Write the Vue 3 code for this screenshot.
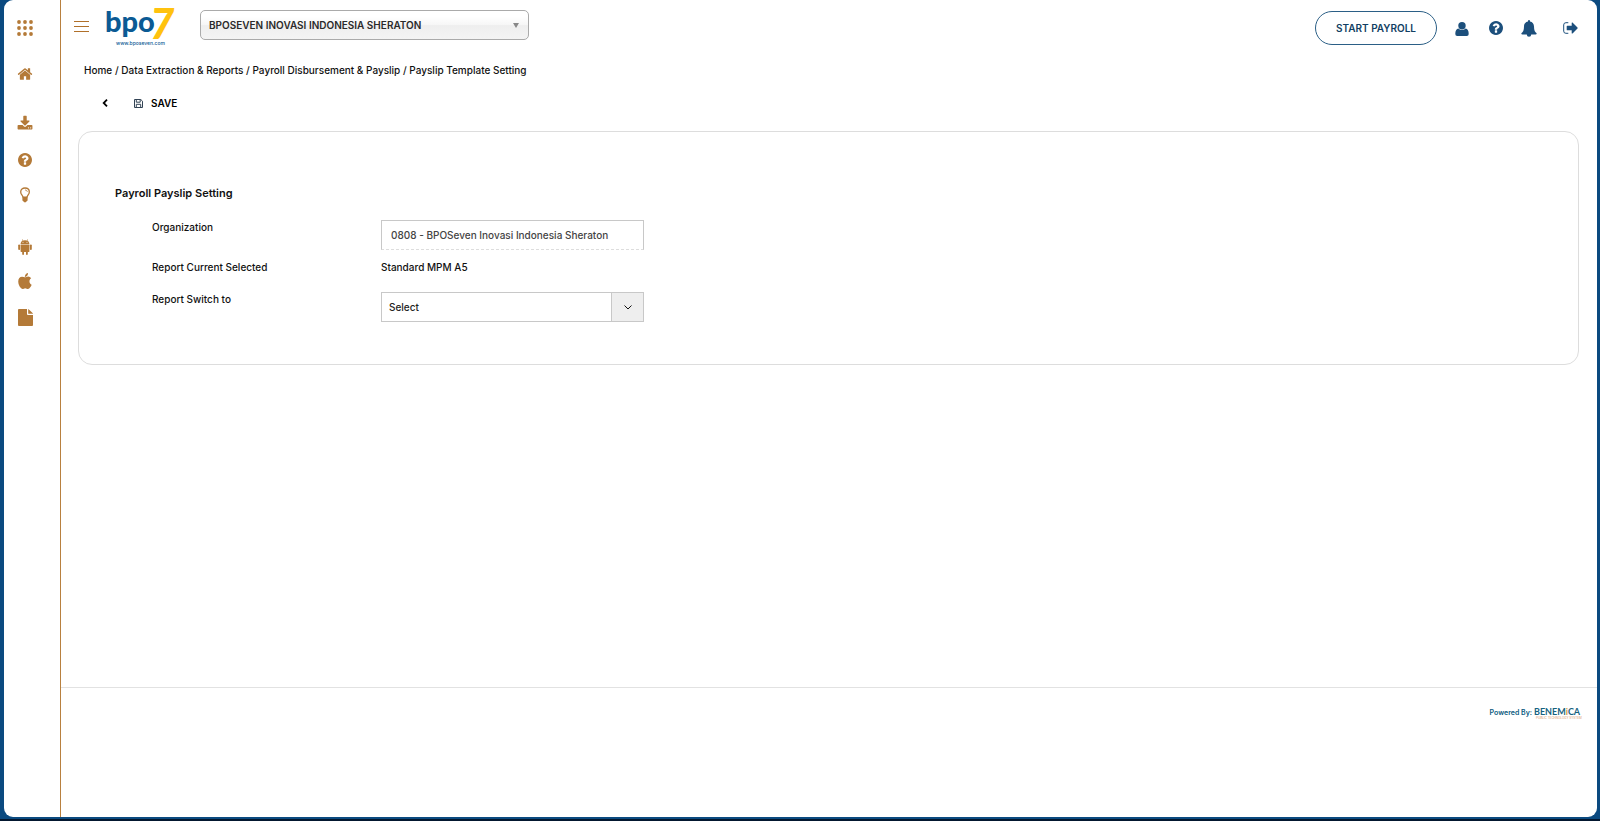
<script setup>
import { ref } from 'vue'

const company = ref('BPOSEVEN INOVASI INDONESIA SHERATON')
const organization = ref('0808 - BPOSeven Inovasi Indonesia Sheraton')
const report = ref('Select')
const crumbs = ['Home', 'Data Extraction & Reports', 'Payroll Disbursement & Payslip']

const question =
  'M1024 1376v-192q0-14-9-23t-23-9h-192q-14 0-23 9t-9 23v192q0 14 9 23t23 9h192q14 0 23-9t9-23zm256-672q0-88-55.5-163t-138.5-116-170-41q-243 0-371 213-15 24 8 42l132 100q7 6 19 6 16 0 25-12 53-68 86-92 34-24 86-24 48 0 85.5 26t37.5 59q0 38-20 61t-68 45q-63 28-115.5 86.5t-52.5 125.5v36q0 14 9 23t23 9h192q14 0 23-9t9-23q0-19 21.5-49.5t54.5-49.5q32-18 49-28.5t46-35 44.500-48 28-60.500 12.500-81zm384 192q0 209-103 385.5t-279.5 279.5-385.5 103-385.5-103-279.5-279.5-103-385.5 103-385.5 279.5-279.5 385.5-103 385.5 103 279.5 279.5 103 385.5z'
</script>

<template>
  <div class="frame">
    <div class="window">
      <nav class="sidebar" aria-label="Shortcuts">
        <a href="#" class="apps" aria-label="Apps">
          <svg viewBox="0 0 16 16" width="16" height="16">
            <g v-for="y in [2, 8, 14]" :key="y">
              <circle v-for="x in [2, 8, 14]" :key="x" :cx="x" :cy="y" r="1.9" />
            </g>
          </svg>
        </a>
        <a href="#" class="home" aria-label="Home">
          <svg viewBox="0 0 1792 1792" width="16" height="16">
            <path d="M1472 992v480q0 26-19 45t-45 19h-384v-384h-256v384h-384q-26 0-45-19t-19-45v-480q0-1 .5-3t.5-3l575-474 575 474q1 2 1 6zm223-69l-62 74q-8 9-21 11h-3q-13 0-21-7l-692-577-692 577q-12 8-24 7-13-2-21-11l-62-74q-8-10-7-23.5t11-21.5l719-599q32-26 76-26t76 26l244 204v-195q0-14 9-23t23-9h192q14 0 23 9t9 23v408l219 182q10 8 11 21.5t-7 23.5z" />
          </svg>
        </a>
        <a href="#" class="download" aria-label="Download">
          <svg viewBox="0 0 1792 1600" width="16" height="16">
            <path d="M1344 1344q0-26-19-45t-45-19-45 19-19 45 19 45 45 19 45-19 19-45zm256 0q0-26-19-45t-45-19-45 19-19 45 19 45 45 19 45-19 19-45zm128-224v320q0 40-28 68t-68 28h-1472q-40 0-68-28t-28-68v-320q0-40 28-68t68-28h465l135 136q58 56 136 56t136-56l136-136h464q40 0 68 28t28 68zm-325-569q17 41-14 70l-448 448q-18 19-45 19t-45-19l-448-448q-31-29-14-70 17-39 59-39h256v-448q0-26 19-45t45-19h256q26 0 45 19t19 45v448h256q42 0 59 39z" />
          </svg>
        </a>
        <a href="#" class="help" aria-label="Help">
          <svg viewBox="128 128 1536 1536" width="14" height="14"><path :d="question" /></svg>
        </a>
        <a href="#" class="ideas" aria-label="Ideas">
          <svg viewBox="0 0 12 16" width="12" height="16">
            <path d="M4 10.400C4 8.500 1.700 7.700 1.700 4.900 1.700 2.500 3.600 1 6 1s4.300 1.500 4.300 3.900C10.300 7.700 8 8.500 8 10.400" fill="none" stroke="currentColor" stroke-width="1.300" />
            <path d="M3.400 9.400h5.200v4.200L7.400 14.400 6.900 15.300H5.100L4.600 14.400 3.400 13.600z" />
            <path d="M6 3c1.400 0 2.300.7 2.300 1.900" fill="none" stroke="currentColor" stroke-width=".8" />
          </svg>
        </a>
        <a href="#" class="android" aria-label="Android">
          <svg viewBox="0 0 14 16" width="14" height="16">
            <path fill-rule="evenodd" d="M2.600 5.100C2.600 3.500 3.500 2.300 4.700 1.600L3.900.3 4.200.1 5.100 1.500a5.300 5.300 0 0 1 3.800 0L9.800.1l.3.200-.8 1.300c1.200.7 2.100 1.900 2.100 3.500zM4.500 3.200a.5.500 0 1 0 1 0 .5.500 0 1 0-1 0m4 0a.5.500 0 1 0 1 0 .5.500 0 1 0-1 0" />
            <path d="M2.600 5.600h8.800v6.600q0 .9-.9.900h-.7v2q0 .9-.9.900T8 15.100v-2H6v2q0 .9-.9.900t-.9-.9v-2h-.7q-.9 0-.9-.9z" />
            <rect x=".2" y="5.400" width="1.900" height="5.600" rx=".95" />
            <rect x="11.900" y="5.400" width="1.900" height="5.600" rx=".95" />
          </svg>
        </a>
        <a href="#" class="apple" aria-label="Apple">
          <svg viewBox="192 0 1408 1664" width="14" height="16">
            <path d="M1585 1215q-39 125-123 250-129 196-257 196-49 0-140-32-86-32-151-32-61 0-142 33-81 34-132 34-152 0-301-259-147-261-147-503 0-228 113-374 113-144 284-144 72 0 177 30 104 30 138 30 45 0 143-34 102-34 173-34 119 0 213 65 52 36 104 100-79 67-114 118-65 94-65 207 0 124 69 223t158 126zm-376-1173q0 61-29 136-30 75-93 138-54 54-108 72-37 11-104 17 3-149 78-257 74-107 250-148 1 3 2.500 11t2.500 11q0 4 .5 10t.5 10z" />
          </svg>
        </a>
        <a href="#" class="document" aria-label="Document">
          <svg viewBox="0 0 15 17" width="15" height="17">
            <path d="M.9 0H9v5.100q0 .9.900.9H15v10.100q0 .9-.9.900H.9Q0 17 0 16.100V.9Q0 0 .9 0zM10.200 0q.4.100.7.400l3.700 3.700q.3.300.4.700h-4.800z" />
          </svg>
        </a>
      </nav>

      <div class="page">
        <header class="topbar">
          <button type="button" class="menu" aria-label="Menu"><i></i><i></i><i></i></button>
          <a href="#" class="logo" aria-label="bpo7">
            <svg viewBox="0 0 72 40" width="72" height="40">
              <text x="0" y="24" class="logo-name">bpo</text>
              <text x="45" y="31" class="logo-seven">7</text>
              <text x="11" y="37" class="logo-site">www.bposeven.com</text>
            </svg>
          </a>
          <div class="company">
            <select v-model="company" aria-label="Company">
              <option>BPOSEVEN INOVASI INDONESIA SHERATON</option>
            </select>
            <svg viewBox="0 0 6 5" width="6" height="5"><path d="M0 0h6L3 5z" /></svg>
          </div>
          <div class="actions">
            <button type="button" class="start">START PAYROLL</button>
            <button type="button" class="icon user" aria-label="Account">
              <svg viewBox="0 0 14 14" width="14" height="14">
                <circle cx="7" cy="3.700" r="3.700" />
                <path d="M3.400 6.500Q5 8.100 7 8.100t3.600-1.600Q13.700 7 13.700 12q0 2-1.900 2H2.200Q.3 14 .3 12 .3 7 3.400 6.500z" />
              </svg>
            </button>
            <button type="button" class="icon support" aria-label="Support">
              <svg viewBox="128 128 1536 1536" width="14" height="14"><path :d="question" /></svg>
            </button>
            <button type="button" class="icon" aria-label="Notifications">
              <svg viewBox="0 0 16 17" width="16" height="17">
                <path d="M8 0q1 0 1 1v.5c2.500.5 4 2.400 4 4.900 0 4 1 5.600 2.700 6.900q0 1.200-1.100 1.200H10.200a2.200 2.200 0 0 1-4.400 0H1.400Q.3 14.500.3 13.300C2 12 3 10.400 3 6.400c0-2.500 1.500-4.400 4-4.900V1q0-1 1-1z" />
              </svg>
            </button>
            <button type="button" class="icon exit" aria-label="Sign out">
              <svg viewBox="0 0 15 12" width="15" height="12">
                <path d="M5.300.7H2.900Q.7.700.7 2.900v6.200q0 2.200 2.200 2.200h2.400" fill="none" stroke="currentColor" stroke-width="1" />
                <path d="M4.300 3.700h4.400V1q0-.9.800-.4l5 5q.4.400 0 .8l-5 5q-.8.500-.8-.4V8.300H4.300q-.6 0-.6-.6V4.300q0-.6.600-.6z" />
              </svg>
            </button>
          </div>
        </header>

        <nav class="crumbs" aria-label="Breadcrumb">
          <template v-for="crumb in crumbs" :key="crumb"><a href="#">{{ crumb }}</a> / </template>
          <span>Payslip Template Setting</span>
        </nav>

        <div class="toolbar">
          <button type="button" aria-label="Back">
            <svg viewBox="0 0 6 8" width="6" height="8">
              <path d="M5 .7 1.700 4 5 7.300" fill="none" stroke="currentColor" stroke-width="1.800" />
            </svg>
          </button>
          <button type="button">
            <svg viewBox="0 0 9 9" width="9" height="9" class="disk">
              <path d="M.5.5h6.300l1.700 1.700v6.300h-8zM2.300.5v2.700h3.900V.5M2.300 8.500V5.300h4.400v3.200" fill="none" stroke="currentColor" />
            </svg>
            <span>SAVE</span>
          </button>
        </div>

        <main class="card">
          <h1>Payroll Payslip Setting</h1>
          <div class="form">
            <label for="organization">Organization</label>
            <input id="organization" v-model="organization" type="text" readonly />
            <span>Report Current Selected</span>
            <span>Standard MPM A5</span>
            <label for="report" class="last">Report Switch to</label>
            <div class="report last">
              <select id="report" v-model="report">
                <option>Select</option>
              </select>
              <span class="arrow">
                <svg viewBox="0 0 8 5" width="8" height="5">
                  <path d="M.5.5 4 4 7.500.5" fill="none" stroke="currentColor" />
                </svg>
              </span>
            </div>
          </div>
        </main>

        <footer>
          <span>Powered By:</span>
          <svg viewBox="0 0 49 14" width="49" height="14" role="img" aria-label="Benemica">
            <text x="0" y="9" class="brand">BENEM<tspan class="gold">i</tspan>CA</text>
            <text x="2" y="13" class="tagline">PUBLIC TECHNOLOGY SYSTEM</text>
          </svg>
        </footer>
      </div>
    </div>
  </div>
</template>

<style>
body {
  background: #0b4a80;
}
</style>

<style scoped>
.frame {
  box-sizing: border-box;
  display: flex;
  min-height: 100vh;
  padding: 0 3px 2px 4px;
  background: #0b4a80;
  border-bottom: 2px solid #03172f;
  font-family: Inter, "Liberation Sans", sans-serif;
  font-size: 10px;
  font-weight: 500;
  line-height: 14px;
  color: #111;
}
.window {
  display: flex;
  flex: 1;
  background: #fff;
  border-radius: 9px;
}
button, input, select {
  margin: 0;
  padding: 0;
  border: 0;
  background: none;
  color: inherit;
  font: inherit;
}
button {
  cursor: pointer;
}
a {
  color: inherit;
  text-decoration: none;
}
svg {
  display: block;
  fill: currentColor;
}
.sidebar {
  display: flex;
  flex-direction: column;
  align-items: center;
  box-sizing: border-box;
  width: 57px;
  padding: 20px 14px 0 0;
  border-right: 1px solid #b8803f;
  color: #b47a38;
}
.home {
  margin-top: 30px;
}
.download {
  margin-top: 33px;
}
.help {
  margin-top: 22px;
}
.ideas {
  margin-top: 20px;
}
.android {
  margin-top: 36px;
}
.apple {
  margin-top: 18px;
}
.document {
  margin-top: 20px;
}
.page {
  display: flex;
  flex: 1;
  flex-direction: column;
  min-width: 0;
}
.topbar {
  display: flex;
  align-items: flex-start;
  padding: 8px 19px 0 13px;
}
.menu {
  display: grid;
  gap: 4px;
  width: 15px;
  margin-top: 13px;
}
.menu i {
  height: 1px;
  background: #b0702a;
}
.logo {
  margin-left: 16px;
}
.logo svg {
  overflow: visible;
}
.logo-name {
  font: 900 29px Lato, sans-serif;
  fill: #0b5a94;
}
.logo-seven {
  font: italic 900 42px Lato, sans-serif;
  fill: #ffc20e;
}
.logo-site {
  font: 500 5px Inter, sans-serif;
  fill: #0b5a94;
}
.company {
  position: relative;
  margin: 2px 0 0 23px;
}
.company select {
  box-sizing: border-box;
  width: 329px;
  height: 30px;
  padding: 0 28px 0 8px;
  border: 1px solid #aaa;
  border-radius: 5px;
  appearance: none;
  background: linear-gradient(#fff 20%, #f6f6f6 50%, #eee 52%, #f4f4f4);
  color: #2b2b2b;
  font-weight: 600;
}
.company svg {
  position: absolute;
  top: 13px;
  right: 10px;
  color: #888;
  pointer-events: none;
}
.actions {
  display: flex;
  align-items: center;
  gap: 18px;
  margin: 3px 0 0 auto;
  color: #1c4f7c;
}
.start {
  width: 122px;
  height: 34px;
  border: 1px solid #2b5f86;
  border-radius: 17px;
  color: #123f63;
  font-weight: 600;
}
.user {
  padding-top: 2px;
}
.support {
  margin-left: 2px;
}
.exit {
  margin-left: 8px;
}
.crumbs {
  margin: 15px 0 0 23px;
}
.toolbar {
  display: flex;
  gap: 26px;
  margin: 19px 0 0 41px;
  color: #000;
}
.toolbar button {
  display: flex;
  align-items: center;
  gap: 8px;
  font-weight: 600;
}
.disk {
  color: #345;
}
.card {
  margin: 21px 18px 0 17px;
  padding: 54px 36px 42px;
  border: 1px solid #ddd;
  border-radius: 14px;
}
h1 {
  margin: 0;
  font-size: 11px;
  font-weight: 600;
  line-height: 14px;
}
.form {
  display: grid;
  grid-template-columns: 229px 263px;
  row-gap: 10px;
  margin: 20px 0 0 37px;
}
.last {
  margin-top: 8px;
}
input {
  box-sizing: border-box;
  width: 100%;
  height: 30px;
  padding: 0 9px;
  border: 1px solid #c8c8c8;
  border-bottom: 1px dashed #ddd;
  color: #444;
}
.report {
  position: relative;
}
.report select {
  box-sizing: border-box;
  width: 100%;
  height: 30px;
  padding: 0 40px 0 7px;
  border: 1px solid #c8c8c8;
  border-radius: 0;
  appearance: none;
  color: #222;
}
.arrow {
  position: absolute;
  inset: 1px 1px 1px auto;
  display: grid;
  place-items: center;
  width: 31px;
  border-left: 1px solid #c8c8c8;
  background: #eee;
  pointer-events: none;
}
footer {
  display: flex;
  align-items: center;
  justify-content: flex-end;
  gap: 2px;
  height: 50px;
  margin-top: auto;
  margin-bottom: 79px;
  padding-right: 14px;
  border-top: 1px solid #e2e2e2;
  color: #0b5a80;
  font-size: 7px;
  font-weight: 600;
}
.brand {
  font: 700 9px Lato, sans-serif;
  fill: #17627f;
}
.gold {
  fill: #d99a3b;
}
.tagline {
  font: 3px Inter, sans-serif;
  fill: #d99a6b;
}
</style>
